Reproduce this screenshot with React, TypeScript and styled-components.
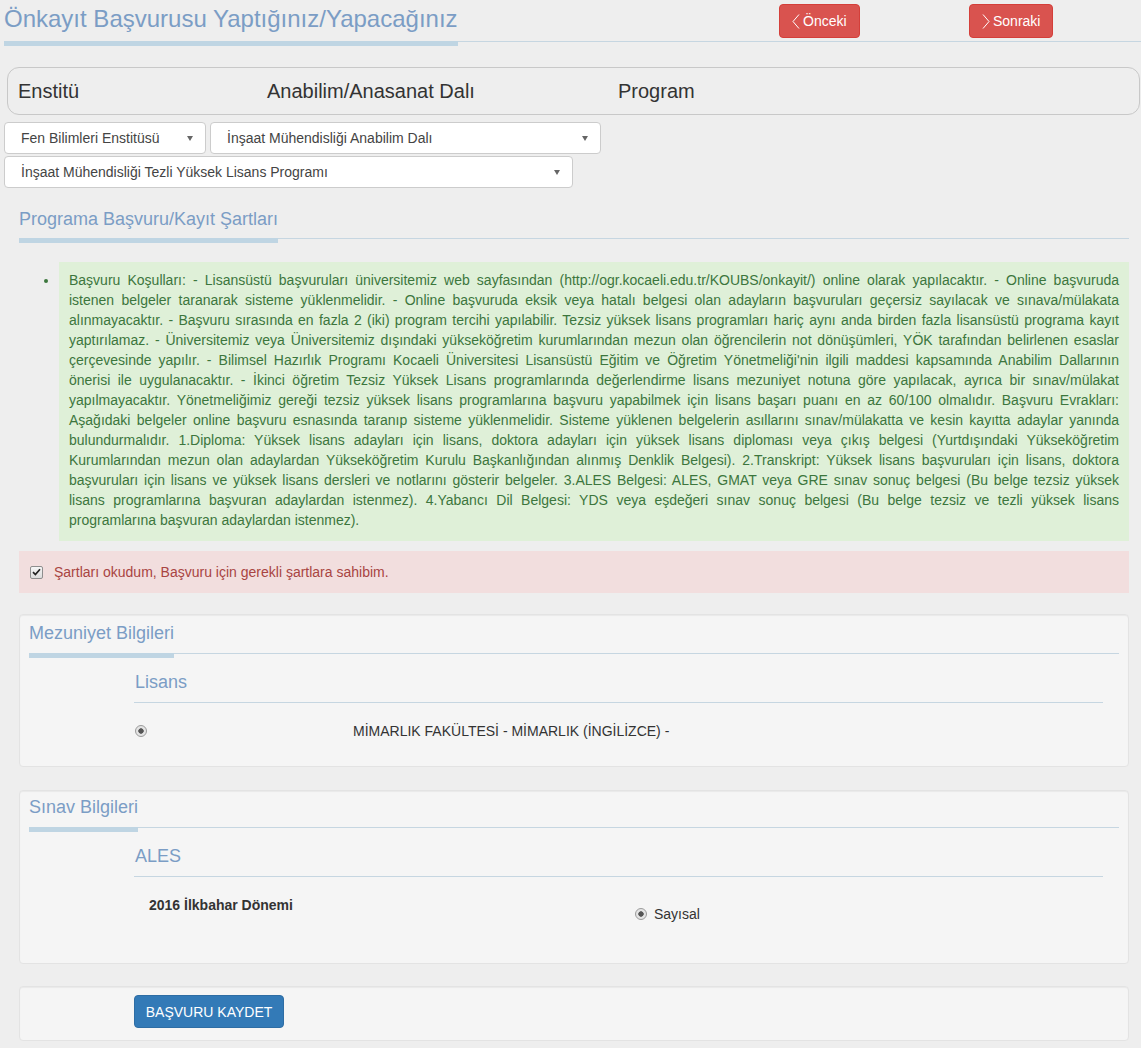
import React from 'react';
import styled, { createGlobalStyle } from 'styled-components';

const TITLE = '#7b9dc5';
const BAR = '#bfd5e3';
const RULE = '#c6d6e1';

const GlobalStyle = createGlobalStyle`
  body {
    margin: 0;
    background: #eeeeee;
    font-family: 'Liberation Sans', Arial, sans-serif;
    font-size: 14px;
    line-height: 20px;
    color: #333;
  }
`;

const Page = styled.div`
  padding-bottom: 8px;
`;

const TopBar = styled.header`
  display: grid;
  grid-template-columns: 775px 190px 1fr;
  align-items: start;
  margin-left: 4px;
  border-bottom: 1px solid ${RULE};
`;

const PageTitle = styled.h1`
  justify-self: start;
  margin: 0 0 -5px;
  padding-bottom: 3px;
  border-bottom: 5px solid ${BAR};
  font-size: 24px;
  font-weight: normal;
  line-height: 38px;
  color: ${TITLE};
`;

const NavButton = styled.button`
  justify-self: start;
  display: flex;
  align-items: center;
  gap: 3px;
  height: 34px;
  margin-top: 4px;
  padding: 0 12px 0 12px;
  border: 1px solid #d43f3a;
  border-radius: 4px;
  background: #d9534f;
  color: #fff;
  font-family: inherit;
  font-size: 14px;
  cursor: pointer;
`;

const FilterPanel = styled.div`
  display: grid;
  grid-template-columns: 249px 351px 1fr;
  align-items: center;
  box-sizing: border-box;
  height: 48px;
  margin: 25px 1px 0 7px;
  padding-left: 10px;
  border: 1px solid #c8c8c8;
  border-radius: 12px;
  font-size: 20px;
  color: #333;
`;

const SelectGrid = styled.div`
  display: flex;
  flex-wrap: wrap;
  gap: 2px 4px;
  width: 600px;
  margin: 7px 0 0 4px;
`;

const SelectBox = styled.div<{ $width: number }>`
  display: flex;
  align-items: center;
  justify-content: space-between;
  box-sizing: border-box;
  width: ${(p) => p.$width}px;
  height: 32px;
  padding: 0 12px 0 16px;
  background: #fff;
  border: 1px solid #ccc;
  border-radius: 4px;
  color: #444;
`;

const SelectArrow = styled.span`
  width: 0;
  height: 0;
  border-left: 3.5px solid transparent;
  border-right: 3.5px solid transparent;
  border-top: 5px solid #666;
`;

const Content = styled.main`
  margin: 0 12px 0 19px;
`;

const SectionHead = styled.div<{ $top?: number }>`
  margin-top: ${(p) => p.$top ?? 0}px;
  border-bottom: 1px solid ${RULE};
`;

const SectionTitle = styled.h2<{ $pad: number }>`
  width: fit-content;
  margin: 0 0 -5px;
  padding-bottom: ${(p) => p.$pad}px;
  border-bottom: 5px solid ${BAR};
  font-size: 18px;
  font-weight: normal;
  line-height: 20px;
  color: ${TITLE};
`;

const TermsList = styled.ul`
  margin: 23px 0 10px;
  padding-left: 40px;
  color: #3c763d;
`;

const TermsItem = styled.li`
  padding: 8px 10px 11px;
  background: #dff0d8;
`;

// the original wraps a little earlier than our font does, so lines are kept as rendered
const TermsLine = styled.span<{ $last?: boolean }>`
  display: block;
  white-space: nowrap;
  text-align: justify;
  text-align-last: ${(p) => (p.$last ? 'left' : 'justify')};
`;

const ConsentAlert = styled.label`
  display: flex;
  align-items: center;
  gap: 11px;
  padding: 11px;
  background: #f2dede;
  color: #a94442;
`;

const CheckBox = styled.span`
  display: flex;
  align-items: center;
  justify-content: center;
  box-sizing: border-box;
  width: 13px;
  height: 13px;
  border: 1px solid #8e8e8e;
  border-radius: 2px;
  background: linear-gradient(#f6f6f6, #dcdcdc);
`;

const Panel = styled.section<{ $top: number; $padTop: number }>`
  margin-top: ${(p) => p.$top}px;
  padding: ${(p) => p.$padTop}px 9px 25px;
  background: #f5f5f5;
  border: 1px solid #e3e3e3;
  border-radius: 4px;
  box-shadow: inset 0 1px 1px rgba(0, 0, 0, 0.05);
`;

const SubBlock = styled.div`
  margin: 18px 16px 0 105px;
`;

const SubTitle = styled.h3`
  margin: 0;
  padding: 0 0 10px 1px;
  border-bottom: 1px solid ${RULE};
  font-size: 18px;
  font-weight: normal;
  line-height: 20px;
  color: ${TITLE};
`;

const ChoiceRow = styled.label`
  display: grid;
  grid-template-columns: 218px 1fr;
  align-items: center;
  margin-top: 18px;
  padding-left: 1px;
`;

const Radio = styled.span`
  display: block;
  box-sizing: border-box;
  width: 12px;
  height: 12px;
  border-radius: 50%;
  border: 1px solid #9b9b9b;
  background: radial-gradient(circle, #555 0 2.4px, #e4e4e4 3px);
`;

const ExamRow = styled.div`
  display: grid;
  grid-template-columns: 486px 1fr;
  margin-top: 18px;
  padding: 0 0 14px 15px;
`;

const ExamName = styled.div`
  font-weight: bold;
`;

const ExamChoice = styled.label`
  display: flex;
  align-items: center;
  gap: 7px;
  padding-top: 9px;
`;

const ActionWell = styled.div`
  margin-top: 22px;
  padding: 8px 0 12px 114px;
  background: #f5f5f5;
  border: 1px solid #e3e3e3;
  border-radius: 4px;
  box-shadow: inset 0 1px 1px rgba(0, 0, 0, 0.05);
`;

const SaveButton = styled.button`
  width: 150px;
  height: 33px;
  border: 1px solid #2e6da4;
  border-radius: 4px;
  background: #337ab7;
  color: #fff;
  font-family: inherit;
  font-size: 14px;
  cursor: pointer;
`;

const Chevron = ({ dir }: { dir: 'left' | 'right' }) => (
  <svg width="8" height="15" viewBox="0 0 8 15">
    <polyline
      points={dir === 'left' ? '7,0.5 1,7.5 7,14.5' : '1,0.5 7,7.5 1,14.5'}
      fill="none"
      stroke="#fff"
      strokeWidth="1"
    />
  </svg>
);

const TERMS = [
  'Başvuru Koşulları: - Lisansüstü başvuruları üniversitemiz web sayfasından (http://ogr.kocaeli.edu.tr/KOUBS/onkayit/) online olarak yapılacaktır. - Online başvuruda',
  'istenen belgeler taranarak sisteme yüklenmelidir. - Online başvuruda eksik veya hatalı belgesi olan adayların başvuruları geçersiz sayılacak ve sınava/mülakata',
  'alınmayacaktır. - Başvuru sırasında en fazla 2 (iki) program tercihi yapılabilir. Tezsiz yüksek lisans programları hariç aynı anda birden fazla lisansüstü programa kayıt',
  'yaptırılamaz. - Üniversitemiz veya Üniversitemiz dışındaki yükseköğretim kurumlarından mezun olan öğrencilerin not dönüşümleri, YÖK tarafından belirlenen esaslar',
  "çerçevesinde yapılır. - Bilimsel Hazırlık Programı Kocaeli Üniversitesi Lisansüstü Eğitim ve Öğretim Yönetmeliği'nin ilgili maddesi kapsamında Anabilim Dallarının",
  'önerisi ile uygulanacaktır. - İkinci öğretim Tezsiz Yüksek Lisans programlarında değerlendirme lisans mezuniyet notuna göre yapılacak, ayrıca bir sınav/mülakat',
  'yapılmayacaktır. Yönetmeliğimiz gereği tezsiz yüksek lisans programlarına başvuru yapabilmek için lisans başarı puanı en az 60/100 olmalıdır. Başvuru Evrakları:',
  'Aşağıdaki belgeler online başvuru esnasında taranıp sisteme yüklenmelidir. Sisteme yüklenen belgelerin asıllarını sınav/mülakatta ve kesin kayıtta adaylar yanında',
  'bulundurmalıdır. 1.Diploma: Yüksek lisans adayları için lisans, doktora adayları için yüksek lisans diploması veya çıkış belgesi (Yurtdışındaki Yükseköğretim',
  'Kurumlarından mezun olan adaylardan Yükseköğretim Kurulu Başkanlığından alınmış Denklik Belgesi). 2.Transkript: Yüksek lisans başvuruları için lisans, doktora',
  'başvuruları için lisans ve yüksek lisans dersleri ve notlarını gösterir belgeler. 3.ALES Belgesi: ALES, GMAT veya GRE sınav sonuç belgesi (Bu belge tezsiz yüksek',
  'lisans programlarına başvuran adaylardan istenmez). 4.Yabancı Dil Belgesi: YDS veya eşdeğeri sınav sonuç belgesi (Bu belge tezsiz ve tezli yüksek lisans',
  'programlarına başvuran adaylardan istenmez).',
];

const selects = [
  { label: 'Fen Bilimleri Enstitüsü', width: 202 },
  { label: 'İnşaat Mühendisliği Anabilim Dalı', width: 391 },
  { label: 'İnşaat Mühendisliği Tezli Yüksek Lisans Programı', width: 569 },
];

const App = () => (
  <Page>
    <GlobalStyle />
    <TopBar>
      <PageTitle>Önkayıt Başvurusu Yaptığınız/Yapacağınız</PageTitle>
      <NavButton>
        <Chevron dir="left" />
        Önceki
      </NavButton>
      <NavButton>
        <Chevron dir="right" />
        Sonraki
      </NavButton>
    </TopBar>

    <FilterPanel>
      <span>Enstitü</span>
      <span>Anabilim/Anasanat Dalı</span>
      <span>Program</span>
    </FilterPanel>

    <SelectGrid>
      {selects.map((s) => (
        <SelectBox key={s.label} $width={s.width}>
          {s.label}
          <SelectArrow />
        </SelectBox>
      ))}
    </SelectGrid>

    <Content>
      <SectionHead $top={21}>
        <SectionTitle $pad={9}>Programa Başvuru/Kayıt Şartları</SectionTitle>
      </SectionHead>

      <TermsList>
        <TermsItem>
          {TERMS.map((line, i) => (
            <TermsLine key={i} $last={i === TERMS.length - 1}>
              {line}
            </TermsLine>
          ))}
        </TermsItem>
      </TermsList>

      <ConsentAlert>
        <CheckBox>
          <svg width="9" height="8" viewBox="0 0 9 8">
            <path d="M1 4.2 L3.4 6.6 L8 1.2" fill="none" stroke="#222" strokeWidth="1.7" />
          </svg>
        </CheckBox>
        Şartları okudum, Başvuru için gerekli şartlara sahibim.
      </ConsentAlert>

      <Panel $top={21} $padTop={8}>
        <SectionHead>
          <SectionTitle $pad={10}>Mezuniyet Bilgileri</SectionTitle>
        </SectionHead>
        <SubBlock>
          <SubTitle>Lisans</SubTitle>
          <ChoiceRow>
            <Radio />
            <span>MİMARLIK FAKÜLTESİ - MİMARLIK (İNGİLİZCE) -</span>
          </ChoiceRow>
        </SubBlock>
      </Panel>

      <Panel $top={23} $padTop={6}>
        <SectionHead>
          <SectionTitle $pad={10}>Sınav Bilgileri</SectionTitle>
        </SectionHead>
        <SubBlock>
          <SubTitle>ALES</SubTitle>
          <ExamRow>
            <ExamName>2016 İlkbahar Dönemi</ExamName>
            <ExamChoice>
              <Radio />
              Sayısal
            </ExamChoice>
          </ExamRow>
        </SubBlock>
      </Panel>

      <ActionWell>
        <SaveButton>BAŞVURU KAYDET</SaveButton>
      </ActionWell>
    </Content>
  </Page>
);

export default App;
